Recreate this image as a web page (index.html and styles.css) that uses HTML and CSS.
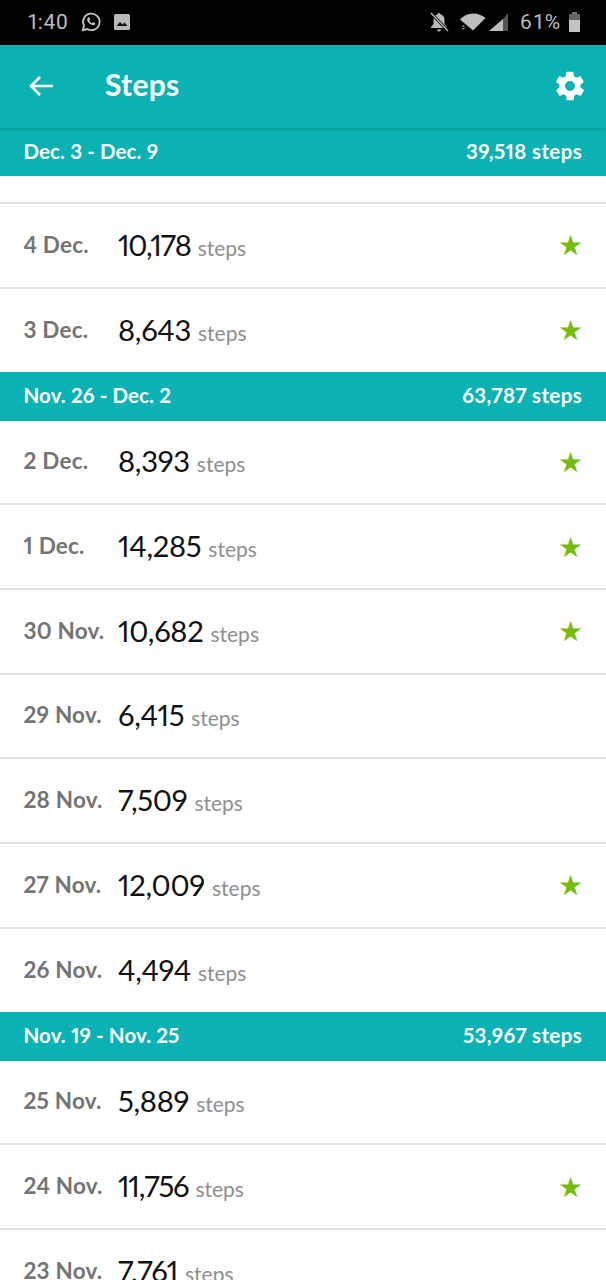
FILE: index.html
```html
<!DOCTYPE html>
<html lang="en">
<head>
<meta charset="utf-8">
<title>Steps</title>
<link rel="stylesheet" href="styles.css">
</head>
<body>
<div class="screen">
  <div class="statusbar">
    <div class="status-left">
      <span class="clock">1:40</span>
      <svg class="ic-wa" viewBox="0 0 24 24" width="22" height="22"><path fill="none" stroke="#c4c4c4" stroke-width="2" d="M3 21l1.400-5A9 9 0 1 1 8 19.700z"/><path fill="#c4c4c4" d="M8.800 7.200c.5-.5 1.200-.4 1.500.2l.7 1.500c.1.400 0 .7-.3 1l-.5.600c.6 1.200 1.500 2.100 2.800 2.800l.7-.7c.3-.3.600-.3 1-.2l1.500.8c.5.300.5 1 .1 1.500-.7.800-1.800 1.100-3 .7-2.500-.8-4.500-2.700-5.300-5-.4-1.200-.1-2.300.8-3.200z"/></svg>
      <svg class="ic-img" viewBox="0 0 18 18" width="18" height="18"><rect x="1" y="1" width="16" height="16" rx="1.500" fill="#b9b9b9"/><path fill="#111" d="M3.500 13l3.500-4 2.500 2.500 2-2 3 3.500z"/></svg>
    </div>
    <div class="status-right">
      <svg viewBox="0 0 22 22" width="22" height="22"><path fill="#b9b9b9" d="M11 2c-.8 0-1.300.6-1.400 1.300C7 4 5.500 6 5.500 9v4L3 16v1h16v-1l-2.500-3V9c0-3-1.500-5-4.100-5.700C12.300 2.600 11.800 2 11 2zM9 18.500h4a2 2 0 0 1-4 0z"/><path stroke="#000" stroke-width="3" d="M3 2l17 18"/><path stroke="#b9b9b9" stroke-width="1.400" d="M3 2l17 18"/></svg>
      <svg class="ic-wifi" viewBox="0 0 28 20" width="28" height="20"><path fill="#bdbdbd" d="M1 7.500C4.500 3.500 9 1.500 14 1.500s8.500 1.500 12.500 4.500L14 18.500z"/><path fill="#999" d="M3 15h3l-1.500-2zM3 16h3l-1.500 2z"/></svg>
      <svg class="ic-sig" viewBox="0 0 20 20" width="20" height="20"><path fill="#bdbdbd" d="M0 19L14 7v12z"/><path fill="#555" d="M14 7l5-6v18h-5z"/></svg>
      <span class="batt-text">61%</span>
      <span class="battery"><span class="battery-cap"></span><span class="battery-empty"></span><span class="battery-full"></span></span>
    </div>
  </div>

  <header class="toolbar">
    <svg class="ic-back" viewBox="0 0 26 22" width="26" height="22"><path fill="none" stroke="#fff" stroke-width="2.600" d="M25 11H3M12 2l-9 9 9 9"/></svg>
    <h1 class="title">Steps</h1>
    <svg class="ic-gear" viewBox="0 0 24 24" width="34" height="34"><path fill="#fff" d="M19.400 13c.1-.3.100-.7.100-1s0-.7-.1-1l2.100-1.600c.2-.2.200-.4.100-.6l-2-3.500c-.1-.2-.4-.3-.6-.2l-2.500 1c-.5-.4-1.100-.7-1.700-1l-.4-2.600c0-.3-.2-.5-.5-.5h-4c-.3 0-.5.200-.5.500l-.4 2.600c-.6.300-1.200.6-1.700 1l-2.500-1c-.2-.1-.5 0-.6.200l-2 3.500c-.1.200-.1.400.1.600L4.600 11c-.1.300-.1.700-.1 1s0 .7.100 1l-2.100 1.600c-.2.200-.2.400-.1.600l2 3.500c.1.200.4.300.6.200l2.500-1c.5.400 1.100.7 1.700 1l.4 2.600c0 .3.200.5.500.5h4c.3 0 .5-.2.500-.5l.4-2.600c.6-.3 1.200-.6 1.700-1l2.500 1c.2.100.5 0 .6-.2l2-3.500c.1-.2.100-.4-.1-.6zM12 15.500a3.500 3.500 0 1 1 0-7 3.500 3.500 0 0 1 0 7z"/></svg>
  </header>

  <div class="section"><span>Dec. 3 - Dec. 9</span><span class="total">39,518 steps</span></div>
  <div class="spacer"></div>
  <div class="row"><span class="date">4 Dec.</span><span class="num tight">10,178</span><span class="unit">steps</span><span class="star">★</span></div>
  <div class="row row-last"><span class="date">3 Dec.</span><span class="num">8,643</span><span class="unit">steps</span><span class="star">★</span></div>

  <div class="section"><span>Nov. 26 - Dec. 2</span><span class="total">63,787 steps</span></div>
  <div class="row"><span class="date">2 Dec.</span><span class="num">8,393</span><span class="unit">steps</span><span class="star">★</span></div>
  <div class="row"><span class="date">1 Dec.</span><span class="num">14,285</span><span class="unit">steps</span><span class="star">★</span></div>
  <div class="row"><span class="date">30 Nov.</span><span class="num">10,682</span><span class="unit">steps</span><span class="star">★</span></div>
  <div class="row"><span class="date">29 Nov.</span><span class="num">6,415</span><span class="unit">steps</span></div>
  <div class="row"><span class="date">28 Nov.</span><span class="num">7,509</span><span class="unit">steps</span></div>
  <div class="row"><span class="date">27 Nov.</span><span class="num">12,009</span><span class="unit">steps</span><span class="star">★</span></div>
  <div class="row row-last"><span class="date">26 Nov.</span><span class="num">4,494</span><span class="unit">steps</span></div>

  <div class="section"><span>Nov. 19 - Nov. 25</span><span class="total">53,967 steps</span></div>
  <div class="row"><span class="date">25 Nov.</span><span class="num">5,889</span><span class="unit">steps</span></div>
  <div class="row"><span class="date">24 Nov.</span><span class="num tight">11,756</span><span class="unit">steps</span><span class="star">★</span></div>
  <div class="row"><span class="date">23 Nov.</span><span class="num">7,761</span><span class="unit">steps</span></div>
</div>
</body>
</html>
```

FILE: styles.css
```css
* { box-sizing: border-box; }
html, body { margin: 0; padding: 0; background: #fff; }
body { font-family: "Lato", "Liberation Sans", sans-serif; font-variant-numeric: proportional-nums; overflow: hidden; height: 1280px; }
.screen { width: 606px; height: 1280px; overflow: hidden; }

.statusbar { height: 45px; background: #000; display: flex; justify-content: space-between; align-items: center; padding: 0 26px 1px 28px; color: #bdbdbd; }
.status-left { display: flex; align-items: center; gap: 11px; }
.status-right { display: flex; align-items: center; gap: 5px; }
.clock { font-family: "Roboto", sans-serif; font-size: 21px; letter-spacing: .6px; }
.batt-text { font-family: "Roboto", sans-serif; font-size: 21px; letter-spacing: 1.900px; margin-left: 6px; margin-right: 2px; }
.ic-wifi { margin-left: 4px; }
.ic-sig { margin-left: -3px; }
.battery { display: flex; flex-direction: column; align-items: center; width: 11px; height: 20px; }
.battery-cap { width: 5px; height: 2px; background: #777; }
.battery-empty { width: 11px; height: 6px; background: #666; }
.battery-full { width: 11px; height: 12px; background: #c4c4c4; }

.toolbar { height: 83px; background: #0bb2b3; display: flex; align-items: center; padding: 0 19px 2px 28px; position: relative; box-shadow: 0 2px 3px rgba(0,0,0,.12); }
.title { margin: 0 0 3px 51px; flex: 1; font-size: 30px; font-weight: 700; letter-spacing: .3px; color: #fff; }

.section { height: 48.4px; background: #0bb2b3; color: #fff; font-size: 20.500px; font-weight: 700; letter-spacing: .1px; display: flex; justify-content: space-between; align-items: center; padding: 0 24px 2px 23.500px; }
.total { letter-spacing: .35px; }
.spacer { height: 27.600px; border-bottom: 2px solid #e3e3e3; }

.row { height: 84.700px; border-bottom: 2px solid #e3e3e3; display: flex; align-items: center; padding: 0 24px 2px 23.500px; }
.row-last { height: 83.500px; border-bottom: none; }
.date { width: 94.500px; flex: none; font-size: 22.500px; font-weight: 700; letter-spacing: .2px; color: #747474; }
.num { font-size: 29.200px; letter-spacing: -.3px; color: #111; }
.tight { letter-spacing: -1.200px; }
.unit { font-size: 21px; color: #8f8f8f; margin-left: 7px; padding-top: 6px; }
.star { margin-left: auto; margin-right: -1px; color: #76bc0f; font-size: 28px; line-height: 1; }
```
